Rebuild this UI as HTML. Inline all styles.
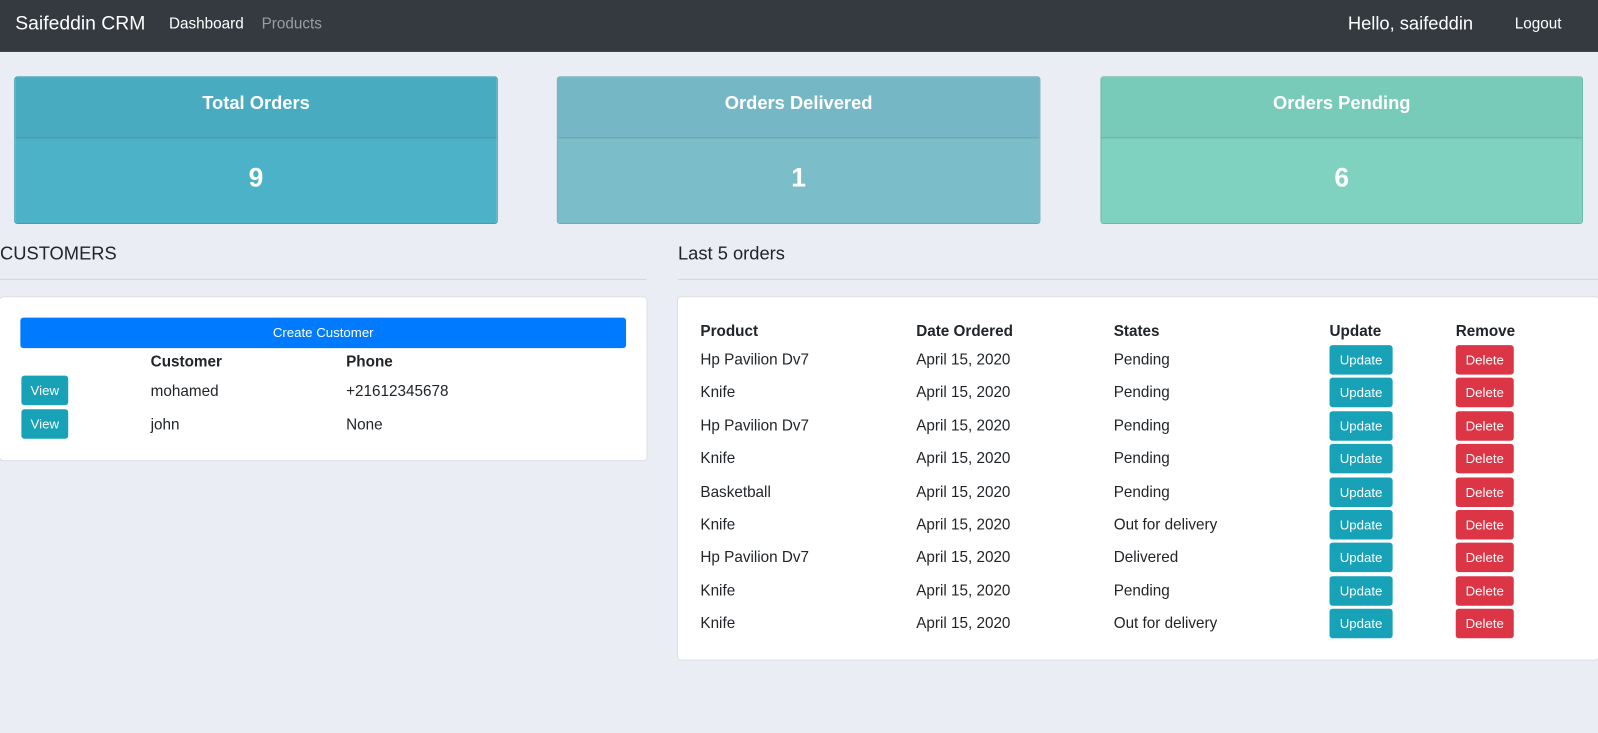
<!DOCTYPE html>
<html><head><meta charset="utf-8"><style>
html,body{margin:0;padding:0;width:1598px;height:733px;overflow:hidden;background:#eaedf4;font-family:"Liberation Sans",sans-serif;color:#212529}
#w{position:absolute;left:0;top:0;width:1570px;height:720px;transform:scale(1.018);transform-origin:0 0}
.a{position:absolute;white-space:nowrap}
.nav{position:absolute;left:0;top:0;width:1570px;height:51px;background:#343a40}
.card{position:absolute;top:75px;height:143px;border-radius:3px;overflow:hidden;color:#fff;font-weight:bold;text-align:center}
.card .h{height:59px;line-height:50px;font-size:18px;border-bottom:1px solid rgba(0,0,0,.12)}
.card .b{height:84px;line-height:76px;font-size:26px}
.box{position:absolute;background:#fff;border:1px solid #dcdfe4;border-radius:4px}
.hr{position:absolute;height:1px;background:#d4d6db}
.btn{position:absolute;color:#fff;font-size:13px;text-align:center;border-radius:3px}
.up{background:#17a2b8;width:62px;height:29px;line-height:29px}
.del{background:#dc3545;width:57px;height:29px;line-height:29px}
.t{font-size:15px}
.th{font-size:15px;font-weight:bold}
</style></head><body><div id="w">
<div class="nav">
<div class="a" style="left:15px;top:13px;font-size:19px;color:#fff">Saifeddin CRM</div>
<div class="a" style="left:166px;top:15px;font-size:15px;color:#fff">Dashboard</div>
<div class="a" style="left:257px;top:15px;font-size:15px;color:#9a9da1">Products</div>
<div class="a" style="left:1324px;top:13px;font-size:18px;color:#fff">Hello, saifeddin</div>
<div class="a" style="left:1488px;top:15px;font-size:15px;color:#fff">Logout</div>
</div>
<div class="card" style="left:14px;width:473px;border:1px solid #3f9fb1"><div class="h" style="background:#48abbf">Total Orders</div><div class="b" style="background:#4bb2c7">9</div></div>
<div class="card" style="left:547px;width:473px;border:1px solid #68abb8"><div class="h" style="background:#76b7c5">Orders Delivered</div><div class="b" style="background:#7bbeca">1</div></div>
<div class="card" style="left:1081px;width:472px;border:1px solid #68b9a7"><div class="h" style="background:#78cab9">Orders Pending</div><div class="b" style="background:#7fd1c0">6</div></div>

<div class="a" style="left:0;top:239px;font-size:18px">CUSTOMERS</div>
<div class="hr" style="left:0;top:274px;width:635px"></div>
<div class="box" style="left:-1px;top:291px;width:635px;height:160px"></div>
<div class="btn" style="left:20px;top:312px;width:595px;height:30px;line-height:30px;background:#007bff;font-size:13px">Create Customer</div>
<div class="a th" style="left:148px;top:347px">Customer</div>
<div class="a th" style="left:340px;top:347px">Phone</div>
<div class="btn up" style="left:21px;top:369px;width:46px">View</div>
<div class="btn up" style="left:21px;top:402px;width:46px">View</div>
<div class="a t" style="left:148px;top:376px">mohamed</div>
<div class="a t" style="left:340px;top:376px">+21612345678</div>
<div class="a t" style="left:148px;top:409px">john</div>
<div class="a t" style="left:340px;top:409px">None</div>

<div class="a" style="left:666px;top:239px;font-size:18px">Last 5 orders</div>
<div class="hr" style="left:666px;top:274px;width:904px"></div>
<div class="box" style="left:665px;top:291px;width:904px;height:356px"></div>
<div class="a th" style="left:688px;top:317px">Product</div>
<div class="a th" style="left:900px;top:317px">Date Ordered</div>
<div class="a th" style="left:1094px;top:317px">States</div>
<div class="a th" style="left:1306px;top:317px">Update</div>
<div class="a th" style="left:1430px;top:317px">Remove</div>
<div id="rows"></div>
</div>
<script>
var d=[["Hp Pavilion Dv7","Pending"],["Knife","Pending"],["Hp Pavilion Dv7","Pending"],["Knife","Pending"],["Basketball","Pending"],["Knife","Out for delivery"],["Hp Pavilion Dv7","Delivered"],["Knife","Pending"],["Knife","Out for delivery"]];
var h="";d.forEach(function(r,i){var y=339+i*32.4;
h+='<div class="a t" style="left:688px;top:'+(y+6)+'px">'+r[0]+'</div><div class="a t" style="left:900px;top:'+(y+6)+'px">April 15, 2020</div><div class="a t" style="left:1094px;top:'+(y+6)+'px">'+r[1]+'</div><div class="btn up" style="left:1306px;top:'+y+'px">Update</div><div class="btn del" style="left:1430px;top:'+y+'px">Delete</div>';});
document.getElementById("rows").innerHTML=h;
</script>
</body></html>
